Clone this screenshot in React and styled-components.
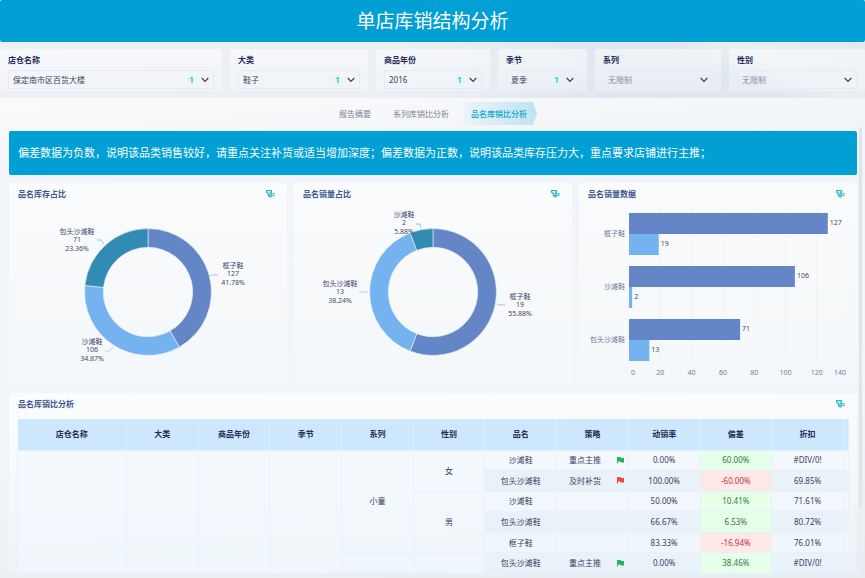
import { useState } from "react";
import styled, { createGlobalStyle } from "styled-components";

const GlobalStyle = createGlobalStyle`
  * {
    box-sizing: border-box;
  }

  body {
    margin: 0;
    overflow: hidden;
    color: #3b3e63;
    background: #eef2f6;
    font-family: "Noto Sans", "Noto Sans CJK SC", sans-serif;
    font-size: 8px;
    line-height: 12px;
  }

  button, select {
    margin: 0;
    padding: 0;
    border: 0;
    background: none;
    color: inherit;
    font: inherit;
  }
`;

const Page = styled.div`
  display: flex;
  flex-direction: column;
  min-height: 100vh;
`;

const Header = styled.header`
  padding: 7px 0;
  border-radius: 2px;
  background: #00a0d4;
  text-align: center;
`;

const Title = styled.h1`
  margin: 0;
  color: #fff;
  font-size: 19px;
  font-weight: 400;
  line-height: 28px;
`;

const FilterBar = styled.section`
  display: grid;
  grid-template-columns: 222fr 138fr 114fr 89fr 126fr 136fr;
  gap: 8px;
  padding: 7px 0;
  background:
    linear-gradient(24deg, transparent 78%, rgba(255, 255, 255, 0.35) 86%, rgba(255, 255, 255, 0.1) 100%),
    linear-gradient(90deg, #edf0f5 0%, #ebeff4 50%, #dfe6ed 72%, #dfe6ed 100%);
`;

const FilterCard = styled.div`
  display: flex;
  flex-direction: column;
  gap: 4px;
  min-width: 0;
  padding: 5px 8px 2px;
  border-radius: 2px;
  background: linear-gradient(rgba(255, 255, 255, 0.5), rgba(255, 255, 255, 0.25));
`;

const FilterLabel = styled.label`
  color: #262b58;
  font-weight: 700;
`;

const SelectBox = styled.div`
  display: flex;
  align-items: center;
  gap: 5px;
  height: 19px;
  padding: 0 4px;
  border: 1px solid #e6ebf1;
`;

const Select = styled.select`
  flex: 1;
  min-width: 0;
  appearance: none;
  outline: none;
  color: ${(props) => (props.$muted ? "#8b8fa8" : "#3b3e63")};
`;

const Count = styled.span`
  width: 9px;
  height: 9px;
  border-radius: 50%;
  background: #e0f6f8;
  color: #16b9c8;
  font-weight: 600;
  line-height: 9px;
  text-align: center;
`;

const Body = styled.main`
  position: relative;
  flex: 1;
  display: flex;
  flex-direction: column;
  padding: 4px 8px 3px 9px;
  background: linear-gradient(175deg, #fafbfc 0%, #f1f4f8 18%, #f2f6f9 60%, #e8edf2 100%);
`;

const Tabs = styled.nav`
  display: flex;
  justify-content: center;
  gap: 2px;
  margin-bottom: 6px;
`;

const Tab = styled.button`
  height: 23px;
  padding: 0 10px;
  cursor: pointer;
  color: ${(props) => (props.$active ? "#0aa5d6" : "#7d8099")};
  font-weight: ${(props) => (props.$active ? 500 : 400)};
  background: ${(props) =>
    props.$active ? "linear-gradient(90deg, #eef5f9, #bfe3f0)" : "none"};
  clip-path: polygon(0 0, calc(100% - 4px) 0, 100% 50%, calc(100% - 4px) 100%, 0 100%, 4px 50%);
`;

const Notice = styled.p`
  margin: 0 0 8px;
  padding: 14px 9px;
  border-radius: 2px;
  background: #00a0d4;
  color: #fff;
  font-size: 11px;
  line-height: 16px;
`;

const Charts = styled.section`
  display: grid;
  grid-template-columns: repeat(3, 1fr);
  gap: 7px;
  margin-bottom: 8px;
`;

const Card = styled.article`
  min-width: 0;
  border-radius: 2px;
  background: linear-gradient(rgba(255, 255, 255, 0.65), rgba(255, 255, 255, 0.2));
`;

const CardHeader = styled.div`
  display: flex;
  justify-content: space-between;
  align-items: center;
  height: 22px;
  padding: 0 12px 0 9px;
`;

const CardTitle = styled.h2`
  margin: 0;
  color: #40568f;
  font-size: 8px;
  font-weight: 700;
`;

const IconButton = styled.button`
  display: flex;
  cursor: pointer;
`;

const Chart = styled.svg`
  display: block;
  width: 100%;
  height: 180px;
  overflow: visible;
  font-size: 7px;
  fill: #45486b;
`;

const AxisText = styled.text`
  fill: #74789a;
`;

const TableWrap = styled.div`
  padding: 4px 8px 0;
`;

const Table = styled.table`
  width: 100%;
  height: 155px;
  table-layout: fixed;
  border-collapse: collapse;
  text-align: center;
`;

const Column = styled.col`
  width: ${(props) => props.$width};
`;

const Th = styled.th`
  height: 31px;
  padding: 0;
  border-right: 1px solid #dbeffc;
  background: #cde8fc;
  color: #262b58;
  font-weight: 700;
`;

const cellColors = {
  plain: ["rgba(240, 248, 253, 0.6)", "#3b3e63"],
  stripe: ["#eaf2f9", "#3b3e63"],
  up: ["#e6ffe8", "#2f7a45"],
  down: ["#ffe8e6", "#bf3640"],
};

const Td = styled.td`
  padding: 0;
  border: 1px solid #e3f2fb;
  background: ${(props) => cellColors[props.$tone || "plain"][0]};
  color: ${(props) => cellColors[props.$tone || "plain"][1]};
`;

const Strategy = styled.div`
  display: grid;
  grid-template-columns: 1fr 7px;
  gap: 4px;
  align-items: center;
  padding-right: 4px;
`;

const Scrollbar = styled.div`
  position: absolute;
  top: 29px;
  right: 3px;
  width: 3px;
  height: 381px;
  border-radius: 2px;
  background: #dfe3ea;
`;

const filters = [
  { name: "店仓名称", value: "保定南市区百货大楼", count: 1 },
  { name: "大类", value: "鞋子", count: 1 },
  { name: "商品年份", value: "2016", count: 1 },
  { name: "季节", value: "夏季", count: 1 },
  { name: "系列", value: "无限制" },
  { name: "性别", value: "无限制" },
];

const tabs = ["报告摘要", "系列库销比分析", "品名库销比分析"];

const stock = [
  { name: "框子鞋", value: 127, percent: 41.78, color: "#6485c6", x: 224, y: 63, line: "201,71 204,70 209,70" },
  { name: "沙滩鞋", value: 106, percent: 34.87, color: "#74b3f0", x: 83, y: 139, line: "104,142 101,146 96,146" },
  { name: "包头沙滩鞋", value: 71, percent: 23.36, color: "#328bb2", x: 68, y: 29, line: "95,39 92,35 88,35" },
];

const sales = [
  { name: "框子鞋", value: 19, percent: 55.88, color: "#6485c6", x: 226, y: 94, line: "203,99 206,100 211,100" },
  { name: "包头沙滩鞋", value: 13, percent: 38.24, color: "#74b3f0", x: 46, y: 81, line: "74,87 70,87 65,87" },
  { name: "沙滩鞋", value: 2, percent: 5.88, color: "#328bb2", x: 110, y: 12, line: "127,23 126,19 122,19" },
];

const bars = [
  { name: "框子鞋", stock: 127, sold: 19 },
  { name: "沙滩鞋", stock: 106, sold: 2 },
  { name: "包头沙滩鞋", stock: 71, sold: 13 },
];

const ticks = [0, 20, 40, 60, 80, 100, 120, 140];

const columns = [
  "店仓名称", "大类", "商品年份", "季节", "系列", "性别",
  "品名", "策略", "动销率", "偏差", "折扣", "",
];

const rows = [
  { series: ["小童", 5], gender: ["女", 2], name: "沙滩鞋", strategy: "重点主推", flag: "#22b35e", rate: "0.00%", diff: "60.00%", discount: "#DIV/0!" },
  { name: "包头沙滩鞋", strategy: "及时补货", flag: "#ee4a45", rate: "100.00%", diff: "-60.00%", discount: "69.85%" },
  { gender: ["男", 3], name: "沙滩鞋", rate: "50.00%", diff: "10.41%", discount: "71.61%" },
  { name: "包头沙滩鞋", rate: "66.67%", diff: "6.53%", discount: "80.72%" },
  { name: "框子鞋", rate: "83.33%", diff: "-16.94%", discount: "76.01%" },
  { series: ["", 1], gender: ["", 1], name: "包头沙滩鞋", strategy: "重点主推", flag: "#22b35e", rate: "0.00%", diff: "38.46%", discount: "#DIV/0!" },
];

const Chevron = () => (
  <svg width="8" height="6" viewBox="0 0 8 6" fill="none" stroke="#363a62" strokeWidth="1.1">
    <path d="M0.7 1L4 4.4L7.3 1" />
  </svg>
);

const FilterIcon = () => (
  <svg width="9" height="8" viewBox="0 0 9 8" fill="none" stroke="#22b8c6">
    <path d="M0.5 0.7H5.5V2.2L4.1 3.4V7L2.4 5.8V3.4L0.5 2.2Z" strokeWidth="1.2" />
    <path d="M5 3.6H8.6M5 5.6H8.6M5.4 3.4V7M7.9 3.4V5.8" strokeWidth="0.8" />
  </svg>
);

const Flag = ({ color }) => (
  <svg width="7" height="7" viewBox="0 0 7 7" fill={color}>
    <path d="M0 0H3.6L4 1H7V5.4H3.6L3.2 4.4H1V6.6H0Z" />
  </svg>
);

const point = (r, percent) => {
  const angle = (percent / 100) * Math.PI * 2;
  return `${139 + r * Math.sin(angle)} ${87 - r * Math.cos(angle)}`;
};

const slicePath = (from, to) => {
  const large = to - from > 50 ? 1 : 0;
  return `M${point(63.4, from)}A63.4 63.4 0 ${large} 1 ${point(63.4, to)}L${point(44.7, to)}A44.7 44.7 0 ${large} 0 ${point(44.7, from)}Z`;
};

const DonutChart = ({ data, label }) => {
  let start = 0;
  return (
    <Chart viewBox="0 0 278 180" role="img" aria-label={label}>
      {data.map((item) => {
        const from = start;
        start += item.percent;
        return (
          <path
            key={item.name}
            d={slicePath(from, start)}
            fill={item.color}
            stroke="#e8f1f8"
            strokeWidth="0.6"
          />
        );
      })}
      {data.map((item) => (
        <g key={item.name} textAnchor="middle">
          <polyline points={item.line} fill="none" stroke={item.color} strokeWidth="0.5" />
          <text x={item.x} y={item.y}>{item.name}</text>
          <text x={item.x} y={item.y + 8}>{item.value}</text>
          <text x={item.x} y={item.y + 17}>{item.percent}%</text>
        </g>
      ))}
    </Chart>
  );
};

const BarChart = ({ label }) => {
  const left = 50;
  const unit = 1.565;
  return (
    <Chart viewBox="0 0 278 180" role="img" aria-label={label}>
      {ticks.slice(1).map((tick) => (
        <line
          key={tick}
          x1={left + tick * unit}
          x2={left + tick * unit}
          y1="3"
          y2="159"
          stroke="#e3e7ec"
          strokeWidth="0.7"
          strokeDasharray="2 2"
        />
      ))}
      {ticks.map((tick) => (
        <AxisText
          key={tick}
          // the outer ticks are pulled inside the plot
          x={tick === 0 ? 54 : tick === 140 ? 261 : left + tick * unit}
          y="170"
          textAnchor="middle"
        >
          {tick}
        </AxisText>
      ))}
      {bars.map((bar, i) => {
        const y = 8 + i * 53;
        return (
          <g key={bar.name}>
            <AxisText x="46" y={y + 23} textAnchor="end">{bar.name}</AxisText>
            <rect x={left} y={y} width={bar.stock * unit} height="21" fill="#6485c6" />
            <rect x={left} y={y + 21} width={bar.sold * unit} height="21" fill="#74b3f0" />
            <text x={left + bar.stock * unit + 2} y={y + 12}>{bar.stock}</text>
            <text x={left + bar.sold * unit + 2} y={y + 33}>{bar.sold}</text>
          </g>
        );
      })}
    </Chart>
  );
};

const ChartCard = ({ title, children }) => (
  <Card>
    <CardHeader>
      <CardTitle>{title}</CardTitle>
      <IconButton type="button" aria-label="筛选">
        <FilterIcon />
      </IconButton>
    </CardHeader>
    {children}
  </Card>
);

const Filter = ({ filter, id }) => (
  <FilterCard>
    <FilterLabel htmlFor={id}>{filter.name}</FilterLabel>
    <SelectBox>
      <Select id={id} $muted={!filter.count}>
        <option>{filter.value}</option>
      </Select>
      {filter.count && <Count>{filter.count}</Count>}
      <Chevron />
    </SelectBox>
  </FilterCard>
);

const DataTable = () => (
  <TableWrap>
    <Table>
      <colgroup>
        {columns.map((column, i) => (
          <Column
            key={i}
            $width={i === 0 ? "109px" : i === columns.length - 1 ? "5px" : "auto"}
          />
        ))}
      </colgroup>
      <thead>
        <tr>
          {columns.map((column, i) => (
            <Th key={i}>{column}</Th>
          ))}
        </tr>
      </thead>
      <tbody>
        {rows.map((row, i) => {
          const tone = i % 2 ? "stripe" : "plain";
          return (
            <tr key={i}>
              {i === 0 && (
                <>
                  <Td rowSpan={6} />
                  <Td rowSpan={6} />
                  <Td rowSpan={6} />
                  <Td rowSpan={6} />
                </>
              )}
              {row.series && <Td rowSpan={row.series[1]}>{row.series[0]}</Td>}
              {row.gender && <Td rowSpan={row.gender[1]}>{row.gender[0]}</Td>}
              <Td $tone={tone}>{row.name}</Td>
              <Td $tone={tone}>
                {row.strategy && (
                  <Strategy>
                    {row.strategy}
                    <Flag color={row.flag} />
                  </Strategy>
                )}
              </Td>
              <Td $tone={tone}>{row.rate}</Td>
              <Td $tone={row.diff.startsWith("-") ? "down" : "up"}>{row.diff}</Td>
              <Td $tone={tone}>{row.discount}</Td>
              <Td $tone={tone} />
            </tr>
          );
        })}
      </tbody>
    </Table>
  </TableWrap>
);

const App = () => {
  const [activeTab, setActiveTab] = useState(2);

  return (
    <Page lang="zh-CN">
      <GlobalStyle />
      <Header>
        <Title>单店库销结构分析</Title>
      </Header>
      <FilterBar>
        {filters.map((filter, i) => (
          <Filter key={filter.name} filter={filter} id={`filter-${i}`} />
        ))}
      </FilterBar>
      <Body>
        <Tabs>
          {tabs.map((tab, i) => (
            <Tab
              key={tab}
              type="button"
              $active={i === activeTab}
              onClick={() => setActiveTab(i)}
            >
              {tab}
            </Tab>
          ))}
        </Tabs>
        <Notice>
          偏差数据为负数，说明该品类销售较好，请重点关注补货或适当增加深度；偏差数据为正数，说明该品类库存压力大，重点要求店铺进行主推；
        </Notice>
        <Charts>
          <ChartCard title="品名库存占比">
            <DonutChart data={stock} label="品名库存占比" />
          </ChartCard>
          <ChartCard title="品名销量占比">
            <DonutChart data={sales} label="品名销量占比" />
          </ChartCard>
          <ChartCard title="品名销量数据">
            <BarChart label="品名销量数据" />
          </ChartCard>
        </Charts>
        <ChartCard title="品名库销比分析">
          <DataTable />
        </ChartCard>
        <Scrollbar />
      </Body>
    </Page>
  );
};

export default App;
